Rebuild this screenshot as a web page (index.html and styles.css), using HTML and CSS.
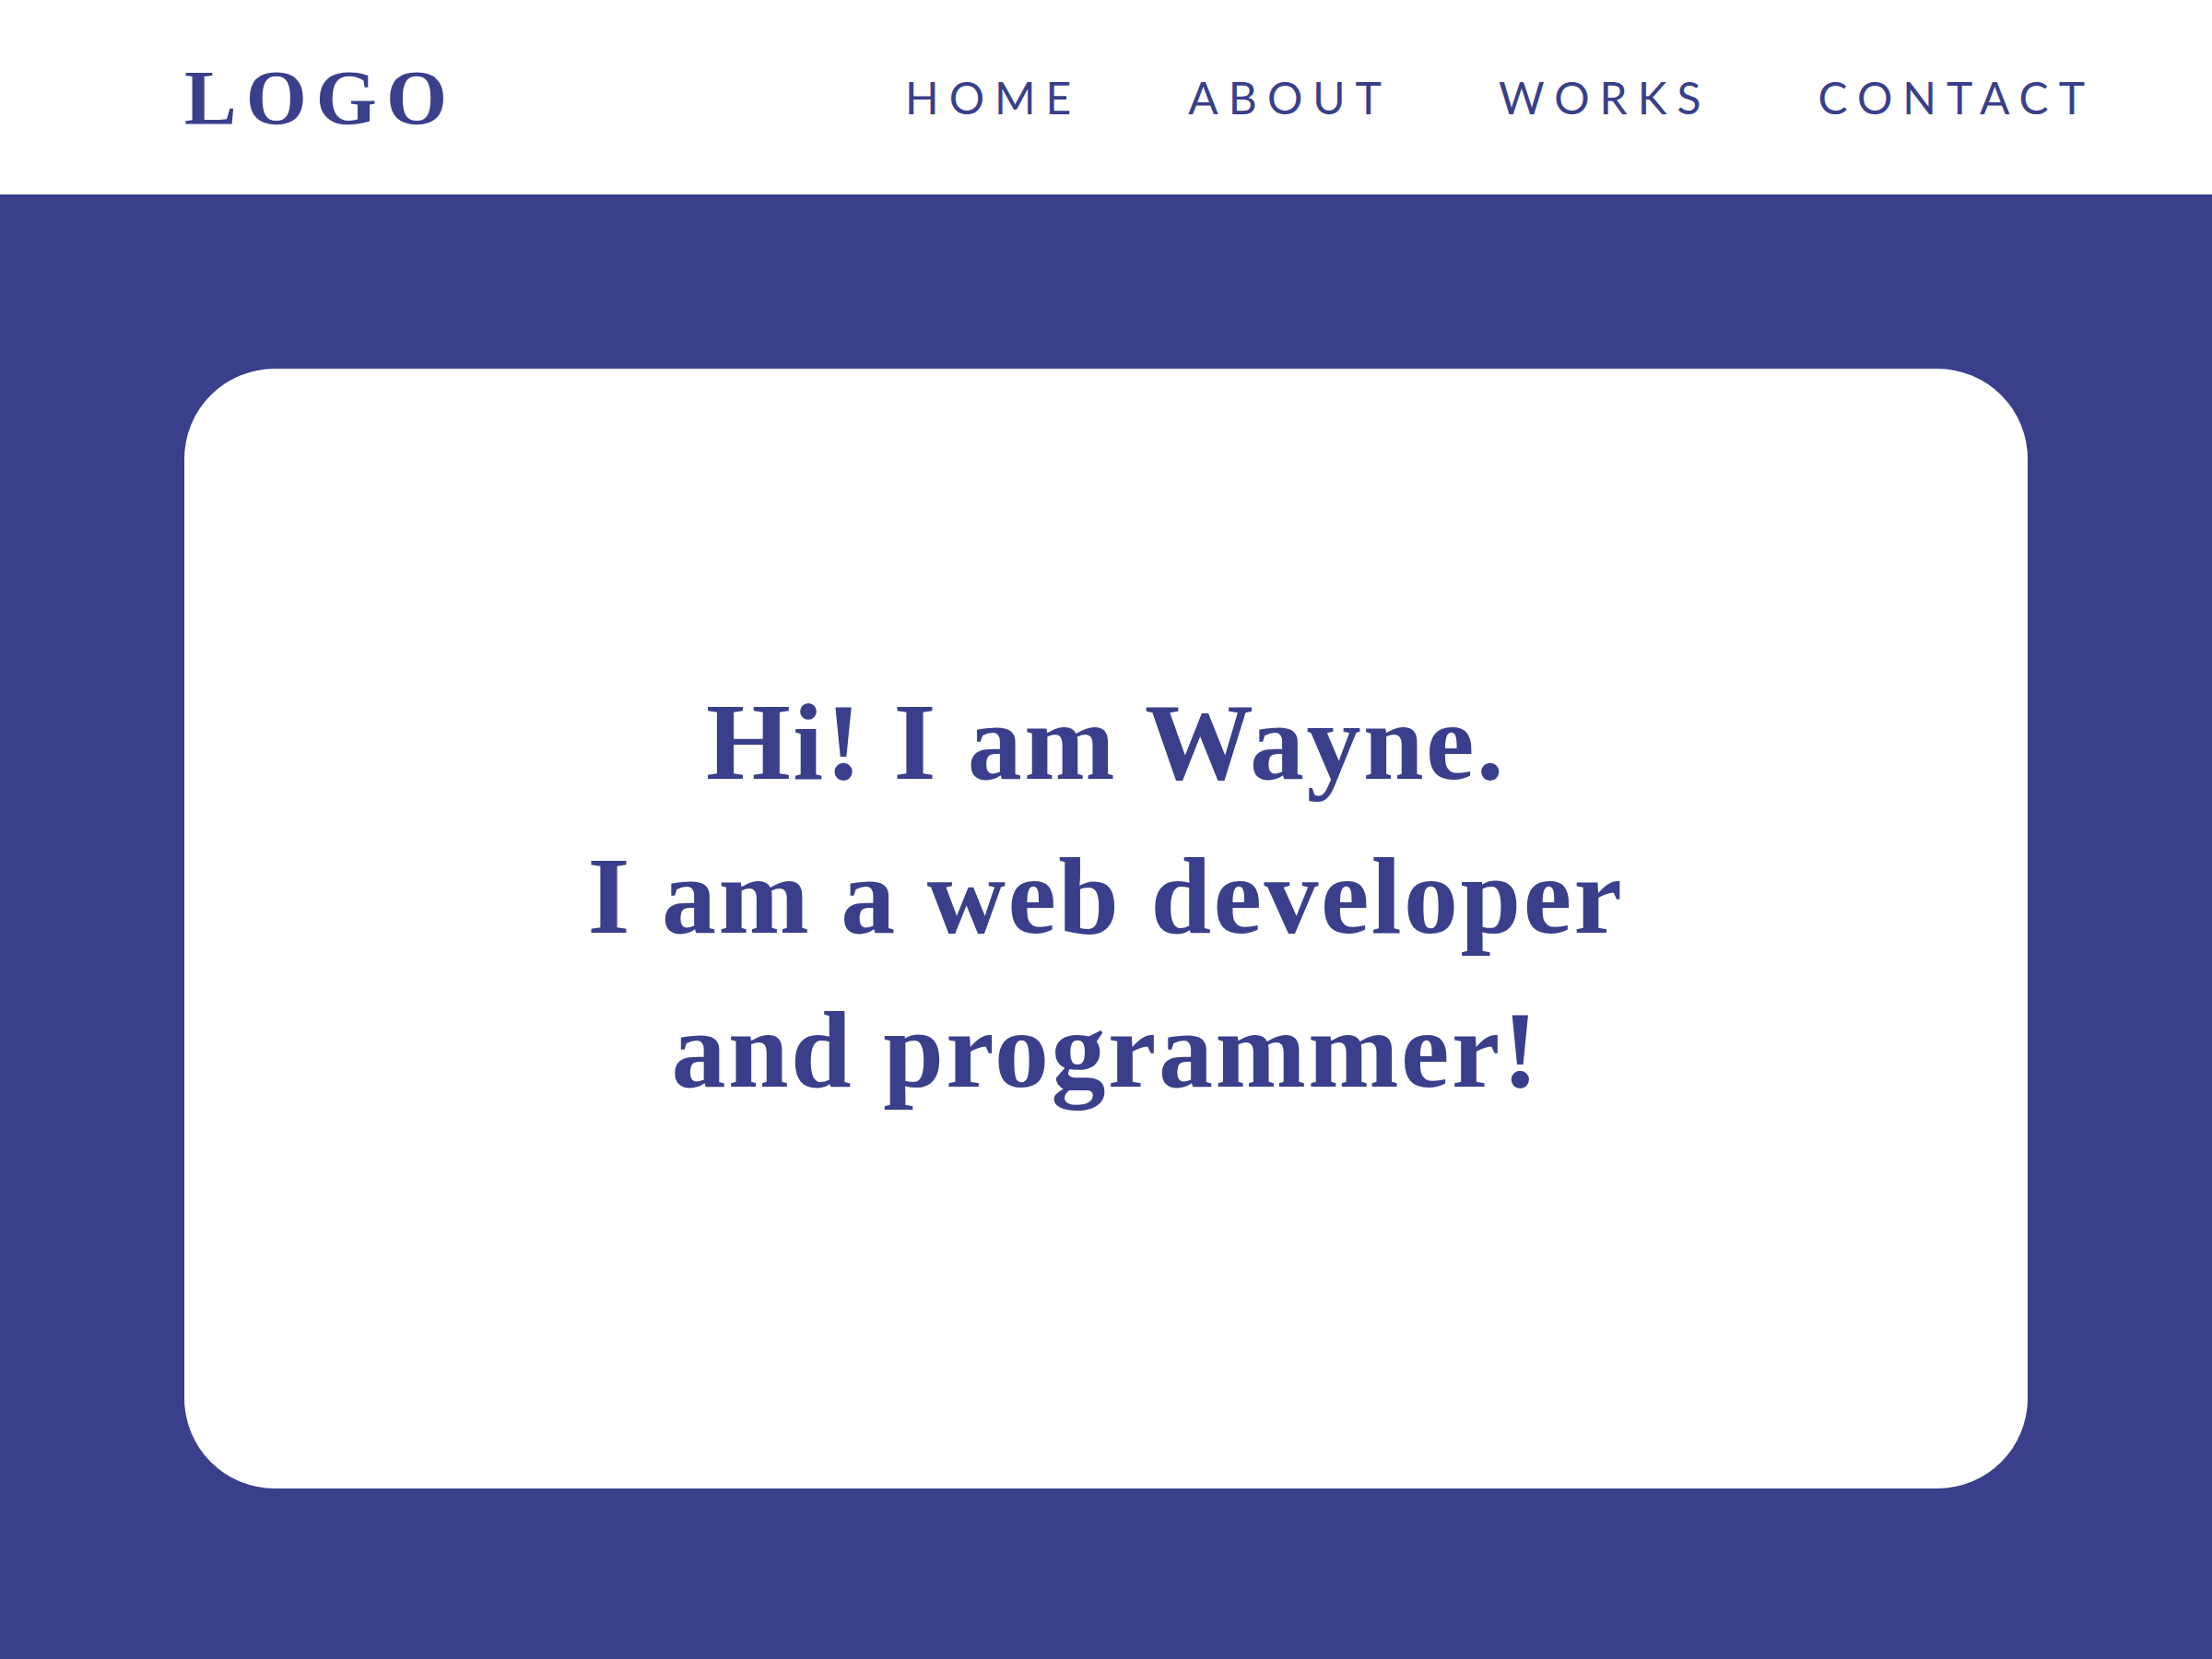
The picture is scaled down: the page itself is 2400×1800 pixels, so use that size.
FILE: index.html
```html
<!DOCTYPE html>
<html lang="en">
<head>
<meta charset="utf-8">
<title>Wayne</title>
<link rel="stylesheet" href="styles.css">
</head>
<body>
<header class="site-header">
  <div class="logo">LOGO</div>
  <nav class="nav">
    <a class="nav-link" href="#">HOME</a>
    <a class="nav-link" href="#">ABOUT</a>
    <a class="nav-link" href="#">WORKS</a>
    <a class="nav-link" href="#">CONTACT</a>
  </nav>
</header>
<main class="hero">
  <section class="card">
    <h1 class="headline">Hi! I am Wayne.<br>I am a web developer<br>and programmer!</h1>
  </section>
</main>
</body>
</html>
```

FILE: styles.css
```css
* { box-sizing: border-box; }
html, body { margin: 0; padding: 0; }
body {
  width: 2400px;
  height: 1800px;
  background: #393f8b;
  overflow: hidden;
}
.site-header {
  height: 211px;
  background: #ffffff;
  display: flex;
  align-items: center;
  justify-content: space-between;
  padding: 0 127px 0 200px;
}
.logo {
  font-family: "Liberation Serif", "Times New Roman", serif;
  font-weight: 700;
  font-size: 85px;
  letter-spacing: 10px;
  color: #393f8b;
  line-height: 1;
  margin-top: 2px;
}
.nav {
  display: flex;
  align-items: center;
  gap: 116px;
}
.nav-link {
  font-family: "Lato", "Liberation Sans", sans-serif;
  font-weight: 400;
  font-size: 48px;
  letter-spacing: 11px;
  color: #393f8b;
  text-decoration: none;
  line-height: 1;
}
.hero {
  padding: 189px 200px 0 200px;
}
.card {
  height: 1215px;
  background: #ffffff;
  border-radius: 98px;
  display: flex;
  align-items: center;
  justify-content: center;
  padding-bottom: 70px;
}
.headline {
  margin: 0;
  font-family: "Liberation Serif", "Times New Roman", serif;
  font-weight: 700;
  font-size: 118px;
  line-height: 167px;
  letter-spacing: 2.5px;
  color: #393f8b;
  text-align: center;
}
```
